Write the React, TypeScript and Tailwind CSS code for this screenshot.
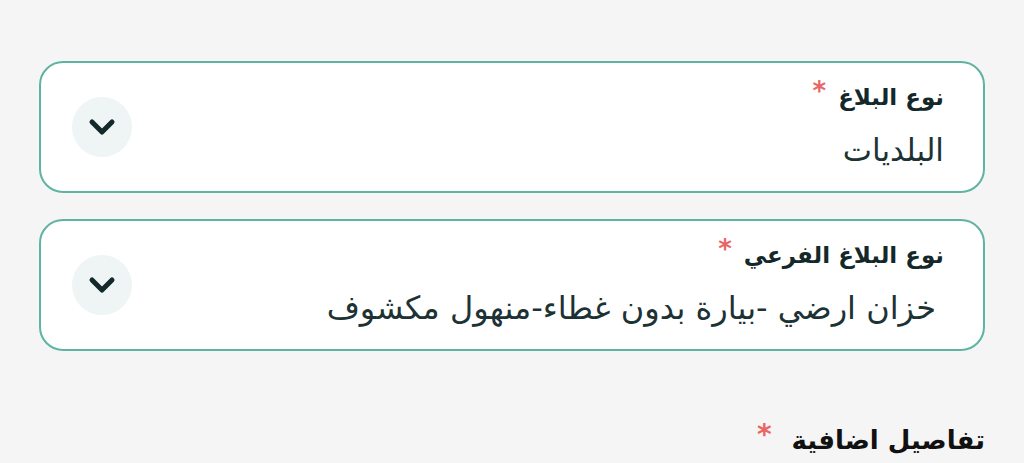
import { ChevronDown } from 'lucide-react'

function SelectField({ label, value, valueClass }: { label: string; value: string; valueClass?: string }) {
  return (
    <div className="flex items-center justify-between h-[132px] rounded-[24px] border-2 border-[#5fb3a1] bg-white pr-[39px] pl-[31px]">
      <div className="flex flex-col items-start gap-[20px] -mt-[4px]">
        <div className="flex items-center gap-[12px]">
          <span className="text-[23px] leading-[30px] font-bold text-[#14282a]">{label}</span>
          <span className="text-[26px] font-bold text-[#ea6565] leading-none -mt-[12px]">*</span>
        </div>
        <span className={`text-[#1d3234] leading-[36px] ${valueClass ?? 'text-[31px]'}`}>{value}</span>
      </div>
      <div className="w-[60px] h-[60px] rounded-full bg-[#eef5f4] flex items-center justify-center">
        <ChevronDown size={40} strokeWidth={3} className="text-[#13292b]" />
      </div>
    </div>
  )
}

export default function App() {
  return (
    <div dir="rtl" className="w-[1024px] h-[463px] overflow-hidden bg-[#f5f5f5] font-['DejaVu_Sans',sans-serif]">
      <div className="pt-[61px] pr-[39px] pl-[39px] flex flex-col gap-[26px]">
        <SelectField label="نوع البلاغ" value="البلديات" />
        <SelectField label="نوع البلاغ الفرعي" value=" خزان ارضي -بيارة بدون غطاء-منهول مكشوف" valueClass="text-[32px] pr-[8px]" />
      </div>
      <div className="mt-[70px] pr-[39px] flex items-center gap-[20px]">
        <span className="text-[26px] font-bold text-[#111]">تفاصيل اضافية</span>
        <span className="text-[28px] font-bold text-[#ea6565] leading-none -mt-[12px]">*</span>
      </div>
    </div>
  )
}
